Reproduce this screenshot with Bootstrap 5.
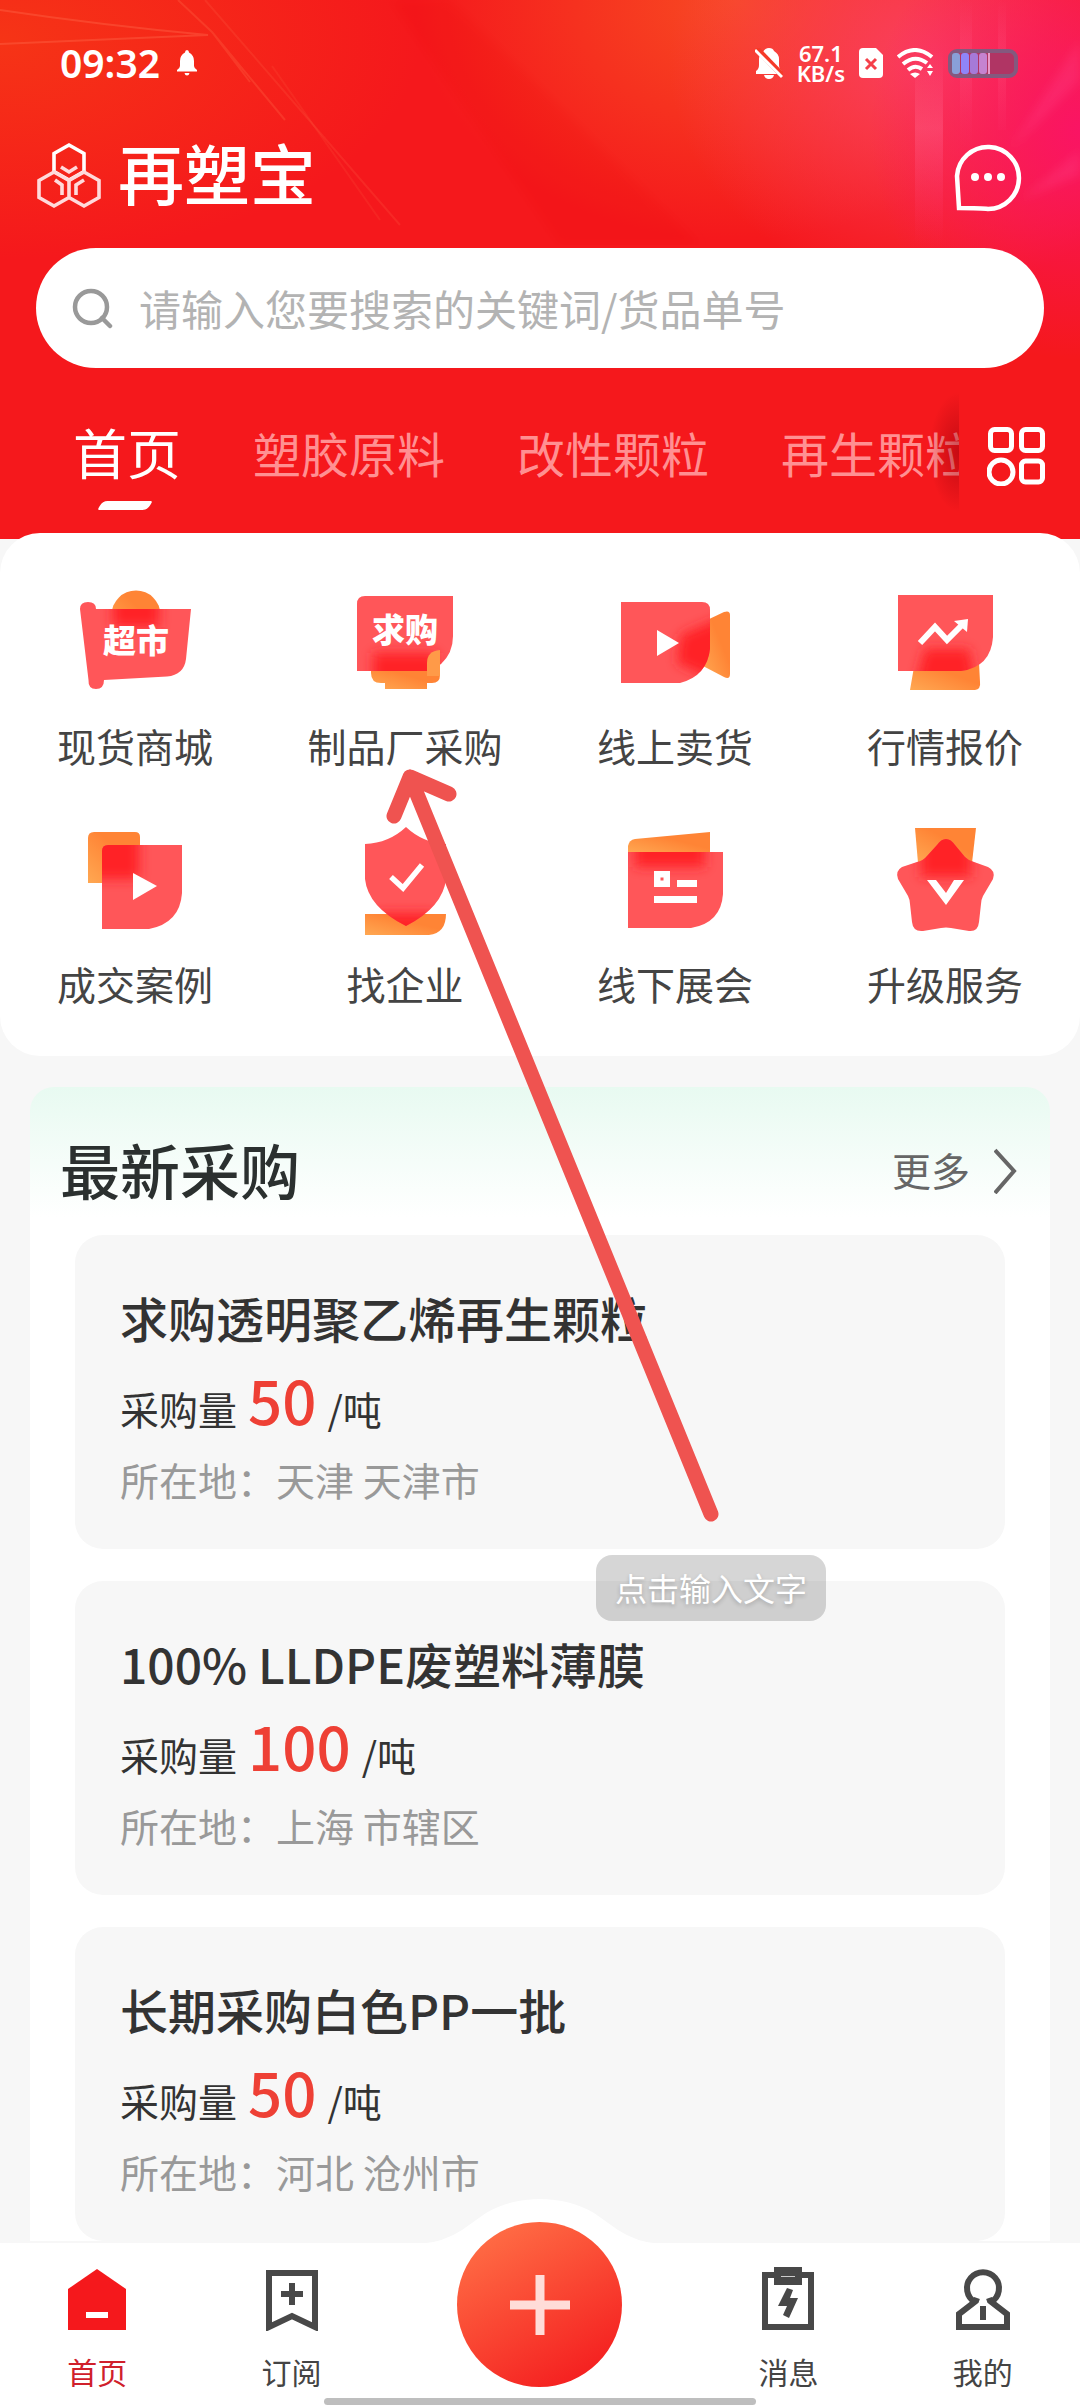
<!DOCTYPE html>
<html lang="zh-CN">
<head>
<meta charset="utf-8">
<meta name="viewport" content="width=device-width, initial-scale=1">
<title>再塑宝</title>
<link href="https://cdn.jsdelivr.net/npm/bootstrap@5.3.0/dist/css/bootstrap.min.css" rel="stylesheet">
<style>
  body { font-family: "Noto Sans CJK SC", "Noto Sans", sans-serif; background: #f7f7f7; color: #333; }
  a { text-decoration: none; color: inherit; }
  svg { display: block; flex: none; }
  .app { padding-bottom: 166px; overflow: hidden; }

  /* header */
  .hero {
    background:
      radial-gradient(ellipse 210px 230px at 100% 130px, #fa1464, rgba(250, 20, 100, 0)),
      radial-gradient(ellipse 260px 230px at 86% 60px, #fa4060, rgba(250, 64, 90, 0)),
      radial-gradient(ellipse 320px 240px at 68% 0, #f74a22, rgba(246, 60, 30, 0)),
      radial-gradient(ellipse 420px 220px at 0 40px, #f63416, rgba(246, 52, 22, 0)),
      #f5181c;
    padding-bottom: 27px;
  }
  .streaks { top: 0; left: 0; width: 100%; height: 245px; }
  .status { height: 60px; margin-top: 33px; padding: 0 62px 0 60px; }
  .clock { font-size: 39px; line-height: 60px; font-weight: 600; font-family: "Noto Sans", sans-serif; }
  .speed { font-size: 22px; line-height: 20px; font-weight: 600; font-family: "Noto Sans", sans-serif; }
  .icons { gap: 14px; }
  .brand-row { height: 80px; margin-top: 38px; padding: 0 58px 0 36px; }
  .brand-name { font-size: 66px; line-height: 80px; font-weight: 500; }
  .search-box { height: 120px; margin: 37px 36px 0; padding: 0 36px; border-radius: 60px; gap: 26px; }
  .search-box input { height: 64px; font-size: 42px; line-height: 64px; color: #333; min-width: 0; }
  .search-box input::placeholder { color: #b3b3b3; opacity: 1; }
  .tab-row { margin-top: 24px; }
  .tabs { height: 120px; gap: 72px; padding-left: 73px; font-size: 48px; line-height: 72px; color: #ff9092; white-space: nowrap; min-width: 0; }
  .tabs a.current { font-size: 54px; color: #fff; position: relative; }
  .tabs a.current::after { content: ""; position: absolute; left: 27px; bottom: -22px; width: 50px; height: 9px; background: #fff; transform: skewX(-30deg); border-radius: 5px 2px; }
  .edge { top: 0; right: 0; width: 36px; height: 120px; background: radial-gradient(ellipse 30px 60px at 100% 50%, rgba(150, 0, 10, .5), rgba(150, 0, 10, 0)); }
  .grid-btn { width: 123px; padding-left: 28px; }

  /* shortcuts */
  .shortcuts { margin-top: -6px; padding: 48px 0 45px; border-radius: 40px; row-gap: 46px; }
  .shortcuts .tag { font: 900 33px "Noto Sans CJK SC", sans-serif; }
  .caption-line { margin-top: 16px; font-size: 39px; line-height: 56px; color: #444; }

  /* latest purchases */
  .latest { margin: 31px 30px 0; padding-top: 40px; border-radius: 24px 24px 0 0; background: linear-gradient(#e8faf1, #fff 130px); }
  .latest-head { padding: 0 32px 0 30px; margin-bottom: 24px; }
  .latest-head h2 { font-size: 60px; line-height: 84px; font-weight: 500; color: #2b302f; }
  .more { font-size: 39px; line-height: 56px; color: #666; gap: 24px; }
  .deals { padding: 0 45px; gap: 32px; }
  .deal { background: #f7f7f7; border-radius: 28px; padding: 46px 45px 42px; }
  .deal h3 { font-size: 48px; line-height: 72px; font-weight: 500; margin: 0; color: #333; }
  .amount { margin-top: 4px; gap: 11px; font-size: 39px; line-height: 56px; }
  .amount strong { font-size: 60px; line-height: 84px; font-weight: 500; color: #ee4035; }
  .place { margin-top: 10px; font-size: 39px; line-height: 56px; color: #999; }

  /* marks drawn over the screen */
  .pointer { left: 380px; top: 760px; pointer-events: none; }
  .hint { left: 596px; top: 1555px; padding: 5px 19px 7px; border-radius: 16px; background: rgba(0, 0, 0, .16); color: #fff; font-size: 32px; line-height: 54px; text-shadow: 0 2px 4px rgba(0, 0, 0, .2); }

  /* bottom bar */
  .dock { padding: 24px 0 17px; background: #fff; font-size: 30px; line-height: 40px; color: #444; }
  .dock a { width: 18%; gap: 20px; }
  .dock a.current { color: #d0202b; }
  .bump { left: 50%; bottom: 164px; margin-left: -120px; }
  .add-btn { left: 50%; top: -21px; width: 165px; height: 165px; margin-left: -83px; background: linear-gradient(150deg, #ff6d45 10%, #f41c1e 92%); }
  .home-bar { left: 30%; right: 30%; bottom: 3px; height: 7px; border-radius: 4px; background: #bebebe; }
</style>
</head>
<body>
<div class="app position-relative">

<header class="hero text-white position-relative overflow-hidden">
  <svg class="streaks position-absolute" viewBox="0 0 1080 245" preserveAspectRatio="none" fill="none" aria-hidden="true">
    <defs>
      <linearGradient id="beam" x1="0" y1="0" x2="0" y2="1"><stop offset="0" stop-color="#ff6a92" stop-opacity="0"/><stop offset=".4" stop-color="#ff6a92" stop-opacity=".35"/><stop offset="1" stop-color="#ff4080" stop-opacity="0"/></linearGradient>
      <filter id="soft"><feGaussianBlur stdDeviation="5"/></filter>
    </defs>
    <g stroke="#ff6a4a" stroke-opacity=".4" stroke-width="2">
      <path d="M0 10Q100 25 208 35L0 44"/><path d="M212 32L250 82M178 0L212 32L285 120" stroke-opacity=".3"/><path d="M205 0L400 225" stroke-opacity=".2"/><path d="M272 66L380 220" stroke-opacity=".15"/>
    </g>
    <path d="M390 0L450 0L700 245L560 245Z" fill="#ea1010" fill-opacity=".12" filter="url(#soft)"/>
    <path d="M915 50H943V245H915Z" fill="url(#beam)"/>
    <path d="M960 0H972V150H960ZM998 0H1006V130H998Z" fill="url(#beam)" fill-opacity=".6"/>
    <path d="M1080 40L1010 150L1080 80ZM1080 150L1020 200L1080 175Z" fill="#ff5aa0" fill-opacity=".2" filter="url(#soft)"/>
  </svg>

  <div class="status d-flex align-items-center justify-content-between position-relative">
    <div class="d-flex align-items-center gap-3">
      <span class="clock">09:32</span>
      <svg width="22" height="26" viewBox="-1 0 22 26" fill="#fff" aria-hidden="true"><path d="M10 0q2 0 2 2.500Q17 5 17 11v5q0 2 3 4v1.500H0V20q3-2 3-4v-5Q3 5 8 2.500Q8 0 10 0zM7.500 23h5q-.5 2.500-2.500 2.500T7.500 23z"/></svg>
    </div>
    <div class="icons d-flex align-items-center">
      <svg width="28" height="31" viewBox="0 0 28 31" aria-hidden="true"><path d="M8 4Q10 0 14 0t5 3q5 3 5 8v6q0 4 3 6v3H1v-3q3-2 3-6v-6q0-4 4-7zM9 27h10q-1 4-5 4t-5-4z" fill="#fff"/><path d="M1 0L28 28" stroke="#f53a28" stroke-width="6"/><path d="M0 2L27 29" stroke="#fff" stroke-width="3"/></svg>
      <div class="speed text-center"><div>67.1</div><div>KB/s</div></div>
      <svg width="24" height="30" viewBox="0 0 24 30" aria-hidden="true"><path d="M4 0h13l7 7v19q0 4-4 4H4q-4 0-4-4V4q0-4 4-4z" fill="#fff"/><path d="M7 11l10 10M17 11L7 21" stroke="#f5404a" stroke-width="3"/></svg>
      <svg width="37" height="30" viewBox="0 0 37 30" aria-hidden="true"><g fill="none" stroke="#fff" stroke-width="4"><path d="M1 9Q18-5 35 9"/><path d="M6 16Q18 6 30 15"/><path d="M11 22Q18 16 25 21"/></g><path d="M13 26q5-3 10 0l-5 4zM30 20l3-4 3 4zM30 23h6l-3 5z" fill="#fff"/></svg>
      <svg width="70" height="29" viewBox="0 0 70 29" aria-hidden="true"><rect x="2" y="2" width="66" height="25" rx="7" fill="#b03564" stroke="#84597e" stroke-width="4"/><rect x="4" y="4" width="8" height="21" rx="3" fill="#89a0d8"/><rect x="13" y="4" width="8" height="21" rx="3" fill="#8f85f8"/><rect x="22" y="4" width="8" height="21" rx="3" fill="#a67ad8"/><rect x="31" y="4" width="8" height="21" rx="3" fill="#c583d0"/><path d="M41 4v21" stroke="#e79ac8" stroke-width="2"/></svg>
    </div>
  </div>

  <div class="brand-row d-flex align-items-center justify-content-between position-relative">
    <div class="d-flex align-items-center gap-3">
      <svg width="66" height="76" viewBox="0 -4 66 76" fill="none" stroke="#fff" stroke-width="3.600" aria-hidden="true">
        <path d="M33 8l15 8.500v18L33 43l-15-8.500v-18z"/>
        <g stroke="#ffdadb"><path d="M18 35l15 8.500v17L18 69 3 60.500v-17zM48 35l15 8.500v17L48 69l-15-8.500v-17z"/><path d="M25 30l8 5 8-5M19 43l7 5v10M48 43l-8 5v10"/></g>
      </svg>
      <span class="brand-name">再塑宝</span>
    </div>
    <button class="btn p-0 border-0" type="button" aria-label="消息">
      <svg width="68" height="84" viewBox="0 -4 68 84" aria-hidden="true"><path d="M5 75L3 43A31 31 0 1 1 34 76Q28 75 5 75z" fill="none" stroke="#fff" stroke-width="4.500"/><g fill="#fff"><circle cx="21" cy="44" r="4"/><circle cx="34" cy="44" r="4"/><circle cx="47" cy="44" r="4"/></g></svg>
    </button>
  </div>

  <form class="search-box bg-white d-flex align-items-center position-relative" role="search">
    <svg width="41" height="41" viewBox="0 0 41 41" fill="none" stroke="#999" stroke-width="4.500" aria-hidden="true"><circle cx="19" cy="19" r="16"/><path d="M30 30l8 8" stroke-linecap="round"/></svg>
    <input id="q" class="flex-grow-1 border-0 bg-transparent p-0" type="text" aria-label="搜索" placeholder="请输入您要搜索的关键词/货品单号">
  </form>

  <div class="tab-row d-flex align-items-center">
    <nav class="tabs flex-grow-1 d-flex align-items-center overflow-hidden position-relative">
      <a class="current" href="#">首页</a><a href="#">塑胶原料</a><a href="#">改性颗粒</a><a href="#">再生颗粒</a>
      <span class="edge position-absolute"></span>
    </nav>
    <button class="grid-btn btn border-0 py-0 pe-0" type="button" aria-label="全部分类">
      <svg width="60" height="68" viewBox="0 -8 60 68" fill="none" stroke="#fff" stroke-width="5" aria-hidden="true"><rect x="3.500" y="3.500" width="21" height="21" rx="4"/><rect x="34.500" y="3.500" width="21" height="21" rx="4"/><circle cx="14" cy="46" r="12"/><rect x="34.500" y="35" width="21" height="21" rx="4"/></svg>
    </button>
  </div>
</header>

<svg width="0" height="0" class="position-absolute" aria-hidden="true">
  <defs>
    <linearGradient id="o" x1="0" y1="1" x2="1" y2="0"><stop offset="0" stop-color="#ffa852"/><stop offset=".6" stop-color="#ff8435"/></linearGradient>
    <filter id="melt" x="-50%" y="-50%" width="200%" height="200%"><feGaussianBlur stdDeviation="6"/></filter>
  </defs>
</svg>

<main>
<section class="shortcuts bg-white row row-cols-4 g-0 position-relative text-center">
  <a class="col d-flex flex-column align-items-center" href="#">
    <svg width="120" height="120" viewBox="0 0 120 120" aria-hidden="true">
      <clipPath id="c1"><path id="p1" d="M5 28q0-7 8-7t8 7H116L111 78Q109 94 92 95.500L29 99q0 9-8 9t-7.500-9z"/></clipPath>
      <circle cx="61" cy="34" r="24.500" fill="url(#o)"/><use href="#p1" fill="#ff5659"/><g clip-path="url(#c1)"><rect x="38" y="12" width="46" height="34" fill="#ff2227" filter="url(#melt)"/></g>
      <text class="tag" x="61" y="72" text-anchor="middle" fill="#fff">超市</text>
    </svg>
    <span class="caption-line">现货商城</span>
  </a>
  <a class="col d-flex flex-column align-items-center" href="#">
    <svg width="120" height="120" viewBox="0 0 120 120" aria-hidden="true">
      <clipPath id="c2"><path id="p2" d="M20 15H108V55Q108 72 96 83L84 90H12V23q0-8 8-8z"/></clipPath>
      <path d="M26 88H95V94q0 8-8 8H82V108H40V102H36Q26 102 26 92z" fill="url(#o)"/><use href="#p2" fill="#ff5659"/><g clip-path="url(#c2)"><rect x="28" y="72" width="64" height="36" fill="#ff2227" filter="url(#melt)"/></g>
      <path d="M82 90V82Q82 70 95 69V95H82z" fill="#ff9a48"/>
      <text class="tag" x="60" y="61" text-anchor="middle" fill="#fff">求购</text>
    </svg>
    <span class="caption-line">制品厂采购</span>
  </a>
  <a class="col d-flex flex-column align-items-center" href="#">
    <svg width="120" height="120" viewBox="0 0 120 120" aria-hidden="true">
      <clipPath id="c3"><path id="p3" d="M6 21H87q8 0 8 8V68Q92 95 65 102H6z"/></clipPath>
      <path d="M90 40L109 31Q115 29 115 34V93Q115 99 109 96L88 85z" fill="url(#o)"/><use href="#p3" fill="#ff5659"/><g clip-path="url(#c3)"><path d="M66 54L112 34V104L62 82z" fill="#ff2227" filter="url(#melt)"/></g>
      <path d="M42 49L64 62L42 75z" fill="#fff"/>
    </svg>
    <span class="caption-line">线上卖货</span>
  </a>
  <a class="col d-flex flex-column align-items-center" href="#">
    <svg width="120" height="120" viewBox="0 0 120 120" aria-hidden="true">
      <clipPath id="c4"><path id="p4" d="M13 14H108V56Q106 86 76 90H13z"/></clipPath>
      <path d="M29 86L25 109H90Q96 108 95 101L94 82z" fill="url(#o)"/><use href="#p4" fill="#ff5659"/><g clip-path="url(#c4)"><path d="M40 68H84L92 112H28z" fill="#ff2227" filter="url(#melt)"/></g>
      <path d="M35 62L50 46L62 59L77 44" fill="none" stroke="#fff" stroke-width="6"/><path d="M83 38L69 40L82 51z" fill="#fff"/>
    </svg>
    <span class="caption-line">行情报价</span>
  </a>
  <a class="col d-flex flex-column align-items-center" href="#">
    <svg width="120" height="120" viewBox="0 0 120 120" aria-hidden="true">
      <clipPath id="c5"><path id="p5" d="M33 26H107V74Q105 104 74 110H27V32q0-6 6-6z"/></clipPath>
      <path d="M19 13H60q5 0 5 5V64H13V19q0-6 6-6z" fill="url(#o)"/><use href="#p5" fill="#ff5659"/><g clip-path="url(#c5)"><rect x="10" y="10" width="54" height="50" fill="#ff2227" filter="url(#melt)"/></g>
      <path d="M58 54L82 67L58 81z" fill="#fff"/>
    </svg>
    <span class="caption-line">成交案例</span>
  </a>
  <a class="col d-flex flex-column align-items-center" href="#">
    <svg width="120" height="120" viewBox="0 0 120 120" aria-hidden="true">
      <clipPath id="c6"><path id="p6" d="M61 8Q78 24 101 25V60Q98 88 61 107Q23 88 20 60V25Q44 24 61 8z"/></clipPath>
      <path d="M20 95H101Q101 114 84 116H20z" fill="url(#o)"/><use href="#p6" fill="#ff5659"/><g clip-path="url(#c6)"><rect x="30" y="94" width="62" height="26" fill="#ff2227" filter="url(#melt)"/></g>
      <path d="M46 58L58 69L77 46" fill="none" stroke="#fff" stroke-width="5.500"/>
    </svg>
    <span class="caption-line">找企业</span>
  </a>
  <a class="col d-flex flex-column align-items-center" href="#">
    <svg width="120" height="120" viewBox="0 0 120 120" aria-hidden="true">
      <clipPath id="c7"><path id="p7" d="M13 33H108V75Q106 104 76 109H13z"/></clipPath>
      <path d="M13 34V27Q14 21 20 20L95 13V34z" fill="url(#o)"/><use href="#p7" fill="#ff5659"/><g clip-path="url(#c7)"><rect x="20" y="14" width="70" height="34" fill="#ff2227" filter="url(#melt)"/></g>
      <path d="M39 52H55V68H39zM45.500 58.500V61.500H48.500V58.500zM62 61H82V68H62zM39 77H82V84H39z" fill="#fff" fill-rule="evenodd"/>
    </svg>
    <span class="caption-line">线下展会</span>
  </a>
  <a class="col d-flex flex-column align-items-center" href="#">
    <svg width="120" height="120" viewBox="0 0 120 120" aria-hidden="true">
      <clipPath id="c8"><path id="p8" d="M61 20Q66 20 70 26L80 38Q84 42 89 43L103 48Q111 52 108 60L98 77Q96 81 96 85L94 103Q93 113 84 112L66 109Q61 108 56 109L38 112Q28 113 27 103L25 85Q25 81 23 77L13 60Q10 52 17 48L32 43Q38 42 42 37L52 26Q56 20 61 20z"/></clipPath>
      <path d="M30 9H91L87 44H33z" fill="url(#o)"/><use href="#p8" fill="#ff5659"/><g clip-path="url(#c8)"><rect x="36" y="10" width="50" height="48" fill="#ff2227" filter="url(#melt)"/></g>
      <path d="M42 61H51L61 74L69 61H79L61 86z" fill="#fff"/>
    </svg>
    <span class="caption-line">升级服务</span>
  </a>
</section>

<section class="latest">
  <div class="latest-head d-flex align-items-center justify-content-between">
    <h2 class="mb-0">最新采购</h2>
    <a class="more d-flex align-items-center" href="#">更多
      <svg width="24" height="50" viewBox="0 -4 24 50" fill="none" stroke="#666" stroke-width="4" aria-hidden="true"><path d="M1 2L20 23L1 45"/></svg>
    </a>
  </div>
  <div class="deals d-flex flex-column">
    <article class="deal">
      <h3>求购透明聚乙烯再生颗粒</h3>
      <div class="amount d-flex align-items-baseline"><span>采购量</span><strong>50</strong><span>/吨</span></div>
      <div class="place">所在地：天津 天津市</div>
    </article>
    <article class="deal">
      <h3>100% LLDPE废塑料薄膜</h3>
      <div class="amount d-flex align-items-baseline"><span>采购量</span><strong>100</strong><span>/吨</span></div>
      <div class="place">所在地：上海 市辖区</div>
    </article>
    <article class="deal">
      <h3>长期采购白色PP一批</h3>
      <div class="amount d-flex align-items-baseline"><span>采购量</span><strong>50</strong><span>/吨</span></div>
      <div class="place">所在地：河北 沧州市</div>
    </article>
  </div>
</section>
</main>

<svg class="pointer position-absolute" width="350" height="770" viewBox="0 0 350 770" fill="none" stroke="#ef5350" stroke-width="15" stroke-linecap="round" stroke-linejoin="round" aria-hidden="true"><path d="M331 754L30 17M14 56L30 17L69 34"/></svg>
<div class="hint position-absolute">点击输入文字</div>
</div>

<nav class="dock fixed-bottom d-flex justify-content-between text-center">
  <svg class="bump position-absolute" width="240" height="46" viewBox="0 0 240 46" aria-hidden="true"><path d="M0 46Q24 44 42 32L66 15Q90 1 120 1T174 15L198 32Q216 44 240 46z" fill="#fff"/></svg>
  <a class="current d-flex flex-column align-items-center" href="#">
    <svg width="64" height="64" viewBox="0 0 64 64" aria-hidden="true"><path d="M32 2L61 22V63H3V22z" fill="#f5181c"/><path d="M21 45H43V51H21z" fill="#fff"/></svg>首页</a>
  <a class="d-flex flex-column align-items-center" href="#">
    <svg width="64" height="64" viewBox="0 0 64 64" fill="none" stroke="#484848" stroke-width="6" aria-hidden="true"><path d="M9 6H55V60L32 49L9 60zM32 16V38M21 27H43"/></svg>订阅</a>
  <button class="add-btn btn rounded-circle border-0 p-0 position-absolute d-flex align-items-center justify-content-center" type="button" aria-label="发布">
    <svg width="62" height="62" viewBox="0 0 62 62" stroke="#ffdcd8" stroke-width="9" aria-hidden="true"><path d="M31 1V61M1 31H61"/></svg>
  </button>
  <span class="flex-grow-1"></span>
  <a class="d-flex flex-column align-items-center" href="#">
    <svg width="64" height="64" viewBox="0 0 64 64" aria-hidden="true"><path d="M9 8H55V60H9z" fill="none" stroke="#484848" stroke-width="6"/><path d="M18 0H46V18H18z" fill="#484848"/><path d="M25 9.500H39" stroke="#ccc"/><path d="M31 21L37 23L34 31H42L33 51L27 48L31 39H22z" fill="#484848"/></svg>消息</a>
  <a class="d-flex flex-column align-items-center" href="#">
    <svg width="64" height="64" viewBox="0 0 64 64" fill="none" stroke="#484848" stroke-width="6" aria-hidden="true"><path d="M24 35A16 16 0 1 1 40 35M26 31L25 34L8 47V60H56V47L39 34L38 31M32 39V53"/></svg>我的</a>
  <span class="home-bar position-absolute"></span>
</nav>
<script src="https://cdn.jsdelivr.net/npm/bootstrap@5.3.0/dist/js/bootstrap.bundle.min.js"></script>
</body>
</html>
